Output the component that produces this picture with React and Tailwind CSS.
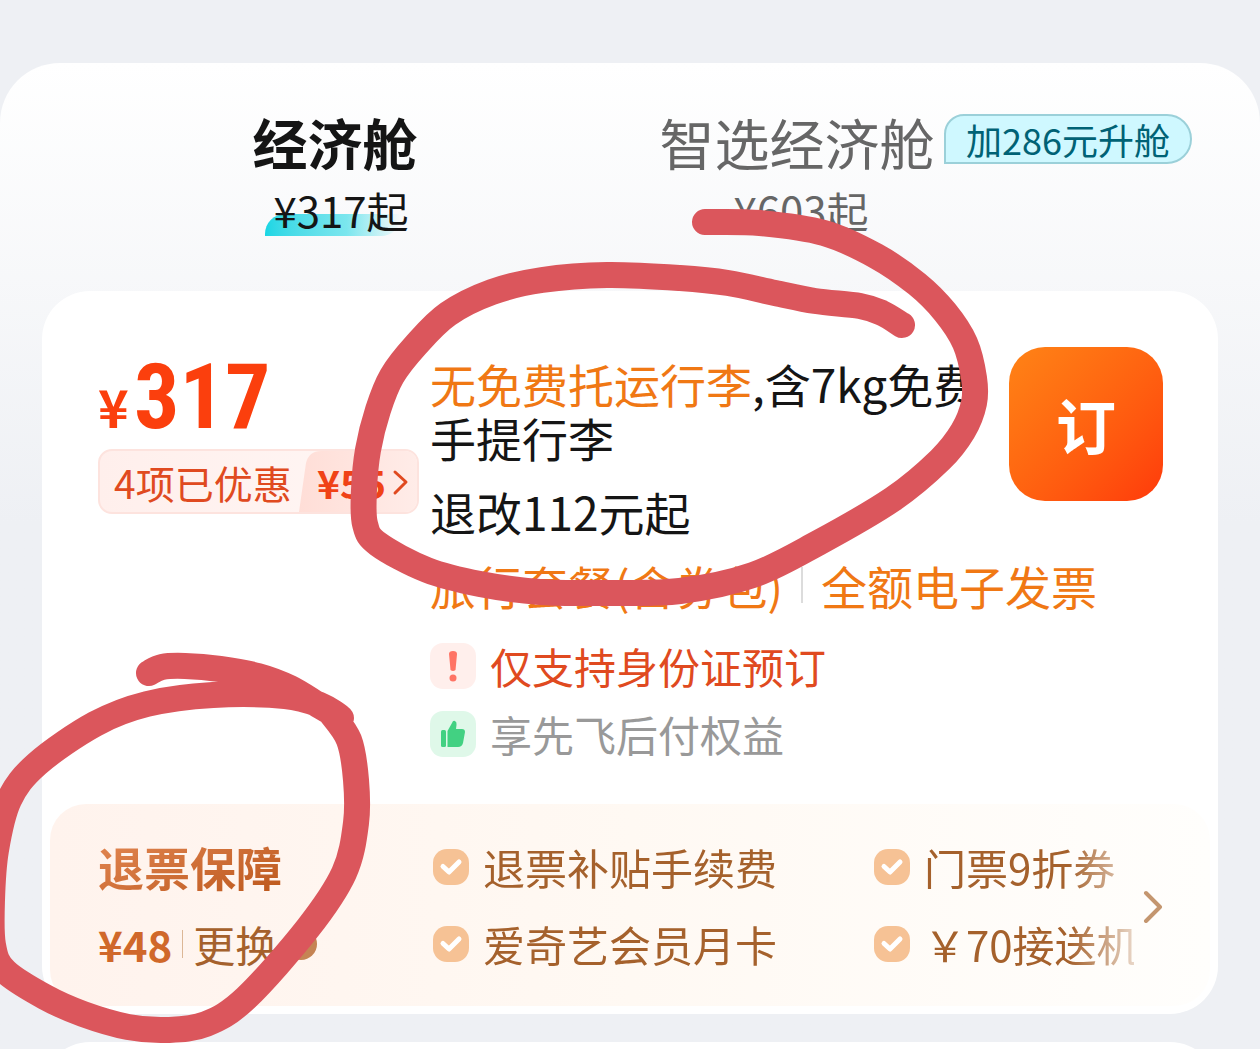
const benefits = [
  { id: 'fee', label: '退票补贴手续费' },
  { id: 'ticket', label: '门票9折券' },
  { id: 'iqiyi', label: '爱奇艺会员月卡' },
  { id: 'transfer', label: '￥70接送机' },
];

const luggageRing = [
  [705, 222], [760, 223], [824, 233], [876, 256], [917, 284], [945, 312], [965, 343], [974, 378], [974, 403], [963, 431],
  [940, 460], [893, 499], [818, 543], [753, 575], [680, 591], [610, 593], [540, 592], [480, 584], [427, 570], [378, 544],
  [365, 524], [364, 490], [368, 450], [378, 410], [392, 376], [416, 345], [448, 314], [492, 292], [542, 280], [607, 275],
  [680, 278], [728, 283], [775, 293], [815, 301], [860, 306], [882, 313], [902, 325],
];

const refundRing = [
  [149, 673], [162, 667], [185, 666], [220, 669], [258, 676], [290, 688], [320, 706], [341, 718], [320, 705], [285, 696],
  [213, 695], [147, 704], [95, 724], [37, 764], [9, 800], [-4, 850], [-8, 900], [-7, 945], [5, 971], [45, 997],
  [83, 1014], [128, 1027], [167, 1030], [206, 1024], [246, 998], [308, 928], [344, 873], [356, 823], [356, 780], [349, 740],
  [330, 712],
];

// Catmull-Rom spline through the points
const toPath = (pts) =>
  pts.slice(1).reduce((d, p, i) => {
    const a = pts[i];
    const before = pts[i - 1] || a;
    const after = pts[i + 2] || p;
    const c1 = [a[0] + (p[0] - before[0]) / 6, a[1] + (p[1] - before[1]) / 6];
    const c2 = [p[0] - (after[0] - a[0]) / 6, p[1] - (after[1] - a[1]) / 6];
    return `${d}C${c1} ${c2} ${p}`;
  }, `M${pts[0]}`);

const CheckBadge = () => (
  <svg viewBox="0 0 36 36" className="size-9 shrink-0" aria-hidden="true">
    <rect width="36" height="36" rx="14" fill="#f6c295" />
    <path d="M10 17.500l6 5.500 10-10" fill="none" stroke="#fff" strokeWidth="5" strokeLinecap="round" strokeLinejoin="round" />
  </svg>
);

const CabinTabs = () => (
  <nav className="grid grid-cols-2 pt-[46px] pr-[232px] pl-[104px]">
    <button type="button" className="flex flex-col items-center text-[#151515]">
      <span className="text-[55px] leading-[64px] font-bold">经济舱</span>
      <span className="relative mt-[11px] ml-3 px-2 text-[42px] leading-[52px]">
        <span className="absolute bottom-0 left-0 h-[22px] w-[136px] rounded-tl-[20px] rounded-br-[20px] bg-linear-to-r from-[#17d6e4] via-[#7be6ee] via-60% to-transparent" />
        <span className="relative">¥317起</span>
      </span>
    </button>
    <button type="button" className="relative flex flex-col items-center text-[#666]">
      <span className="text-[55px] leading-[64px] whitespace-nowrap">智选经济舱</span>
      <span className="mt-[11px] ml-2 text-[42px] leading-[52px]">¥603起</span>
      <span className="absolute top-[5px] left-[378px] rounded-l-[20px] rounded-r-[25px] rounded-bl-none border-2 border-[#9bd0d9] bg-[#cff8ff] px-5 text-[36px] leading-[46px] whitespace-nowrap text-[#006275]">
        加286元升舱
      </span>
    </button>
  </nav>
);

const PriceColumn = () => (
  <div className="w-[332px] shrink-0">
    <p className="flex items-baseline font-bold text-[#fb3f0d]">
      <span className="w-9 text-[52px] leading-none">¥</span>
      <span className="font-['Roboto_Condensed','Noto_Sans_Condensed','Open_Sans_Condensed',Roboto,sans-serif] text-[90px] leading-[102px]">317</span>
    </p>
    <button type="button" className="flex h-[65px] w-[321px] items-stretch overflow-hidden rounded-[14px] border-2 border-[#fde3de] bg-linear-to-r from-[#ffefec] to-[#fff7f5] text-[#e04a20]">
      <span className="flex flex-1 items-center pl-[14px] text-[39px] leading-[60px] whitespace-nowrap">4项已优惠</span>
      <span className="relative flex w-[118px] items-center pl-[18px] text-[39px] leading-[60px] font-bold">
        <svg viewBox="0 0 118 61" className="absolute inset-0 size-full" aria-hidden="true">
          <defs>
            <linearGradient id="discount">
              <stop offset="0" stopColor="#ffded7" />
              <stop offset="1" stopColor="#ffece8" />
            </linearGradient>
          </defs>
          <path d="M0 61L7 12Q10 0 22 0H118V61Z" fill="url(#discount)" />
        </svg>
        <span className="relative text-[#f04216]">¥55</span>
        <svg viewBox="0 0 20 32" className="relative ml-1 h-8 w-5 shrink-0" fill="none" stroke="currentColor" strokeWidth="3" strokeLinecap="round" strokeLinejoin="round" aria-hidden="true">
          <path d="M5 6l11 10-11 11" />
        </svg>
      </span>
    </button>
  </div>
);

const FareDetails = () => (
  <div className="min-w-0 flex-1 pt-[9px]">
    <p className="max-w-[550px] text-[46px] leading-[54px] text-[#151515]">
      <span className="text-[#f07814]">无免费托运行李</span>,含7kg免费手提行李
    </p>
    <p className="mt-5 text-[46px] leading-[54px] text-[#151515]">退改112元起</p>
    <p className="mt-5 flex items-center text-[46px] leading-[54px] whitespace-nowrap text-[#f07814]">
      旅行套餐(含券包)
      <span className="mx-[18px] h-9 w-[2px] bg-[#dcdcdc]" />
      全额电子发票
    </p>
    <div className="mt-5 flex items-center gap-[14px]">
      <svg viewBox="0 0 46 46" className="size-[46px]" aria-hidden="true">
        <rect width="46" height="46" rx="13" fill="#ffefec" />
        <path d="M19 11Q19 8 23 8Q27 8 27 11L25.500 27Q23 29 20.500 27Z" fill="#ff7465" />
        <circle cx="23" cy="35" r="3.500" fill="#ff7465" />
      </svg>
      <p className="text-[42px] leading-[68px] text-[#e04a20]">仅支持身份证预订</p>
    </div>
    <div className="flex items-center gap-[14px]">
      <svg viewBox="0 0 46 46" className="size-[46px]" aria-hidden="true">
        <rect width="46" height="46" rx="13" fill="#dff8e9" />
        <rect x="11" y="19" width="5" height="17" rx="1.500" fill="#42d182" />
        <path d="M17.500 20L22 12Q23 9 25 10Q27 11 26.500 14L26 18H32Q35 18 35 21L33 32Q32 36 28 36H17.500Z" fill="#42d182" />
      </svg>
      <p className="text-[42px] leading-[68px] text-[#999]">享先飞后付权益</p>
    </div>
  </div>
);

const RefundPanel = () => (
  <section className="mx-2 mt-9 mb-[7px] flex items-center rounded-[36px] bg-linear-to-r from-[#fff3ed] via-[#fff9f3] via-50% to-[#fffefc] pt-6 pr-10 pb-6 pl-12 text-[#a5612c]">
    <div className="w-[335px] shrink-0">
      <h2 className="w-fit bg-linear-to-br from-[#e58a55] to-[#b95413] bg-clip-text text-[46px] leading-[77px] font-bold text-transparent">退票保障</h2>
      <div className="flex items-center text-[42px] leading-[77px]">
        <strong className="text-[#d0682a]">¥48</strong>
        <span className="mx-[10px] h-7 w-px bg-[#dcb796]" />
        <button type="button" className="flex items-center gap-2">
          更换
          <span className="size-8 rounded-full bg-[#c58454]" />
        </button>
      </div>
    </div>
    <ul className="grid flex-1 grid-cols-[441px_1fr] overflow-hidden mask-[linear-gradient(to_right,black_calc(100%-65px),rgba(0,0,0,0.25))]">
      {benefits.map((b) => (
        <li key={b.id} className="flex items-center gap-[14px] text-[42px] leading-[77px] whitespace-nowrap">
          <CheckBadge />
          {b.label}
        </li>
      ))}
    </ul>
    <button type="button" aria-label="更多权益" className="shrink-0">
      <svg viewBox="0 0 36 36" className="size-9" fill="none" stroke="#c4966f" strokeWidth="4" strokeLinecap="round" strokeLinejoin="round">
        <path d="M12 6l14 14-14 14" />
      </svg>
    </button>
  </section>
);

// hand-drawn highlight rings
const Markup = () => (
  <svg
    viewBox="0 0 1260 1049"
    preserveAspectRatio="xMinYMin meet"
    className="pointer-events-none absolute inset-0 w-full"
    fill="none"
    stroke="#db565c"
    strokeWidth="26"
    strokeLinecap="round"
    strokeLinejoin="round"
    aria-hidden="true"
  >
    <path d={toPath(luggageRing)} />
    <path d={toPath(refundRing)} />
  </svg>
);

const App = () => {
  return (
    <main className="relative flex h-screen flex-col overflow-hidden bg-[#eef0f4] pt-[63px] font-['Noto_Sans_CJK_SC',sans-serif]">
      <div className="shrink-0 rounded-t-[60px] bg-linear-to-b from-white to-[#eef0f4] to-[460px] pb-7">
        <CabinTabs />
        <article className="mx-[42px] mt-[55px] rounded-[48px] bg-white pt-[56px] pb-px">
          <div className="flex items-start pr-[55px] pl-14">
            <PriceColumn />
            <FareDetails />
            <button type="button" className="-ml-[154px] size-[154px] shrink-0 rounded-[36px] bg-linear-to-br from-[#ff8316] to-[#ff390b] text-[60px] font-bold text-white">
              订
            </button>
          </div>
          <RefundPanel />
        </article>
      </div>
      <div className="min-h-0 flex-1 overflow-hidden px-[42px]">
        <div className="h-20 rounded-t-[48px] bg-white" />
      </div>
      <Markup />
    </main>
  );
};

export default App;
